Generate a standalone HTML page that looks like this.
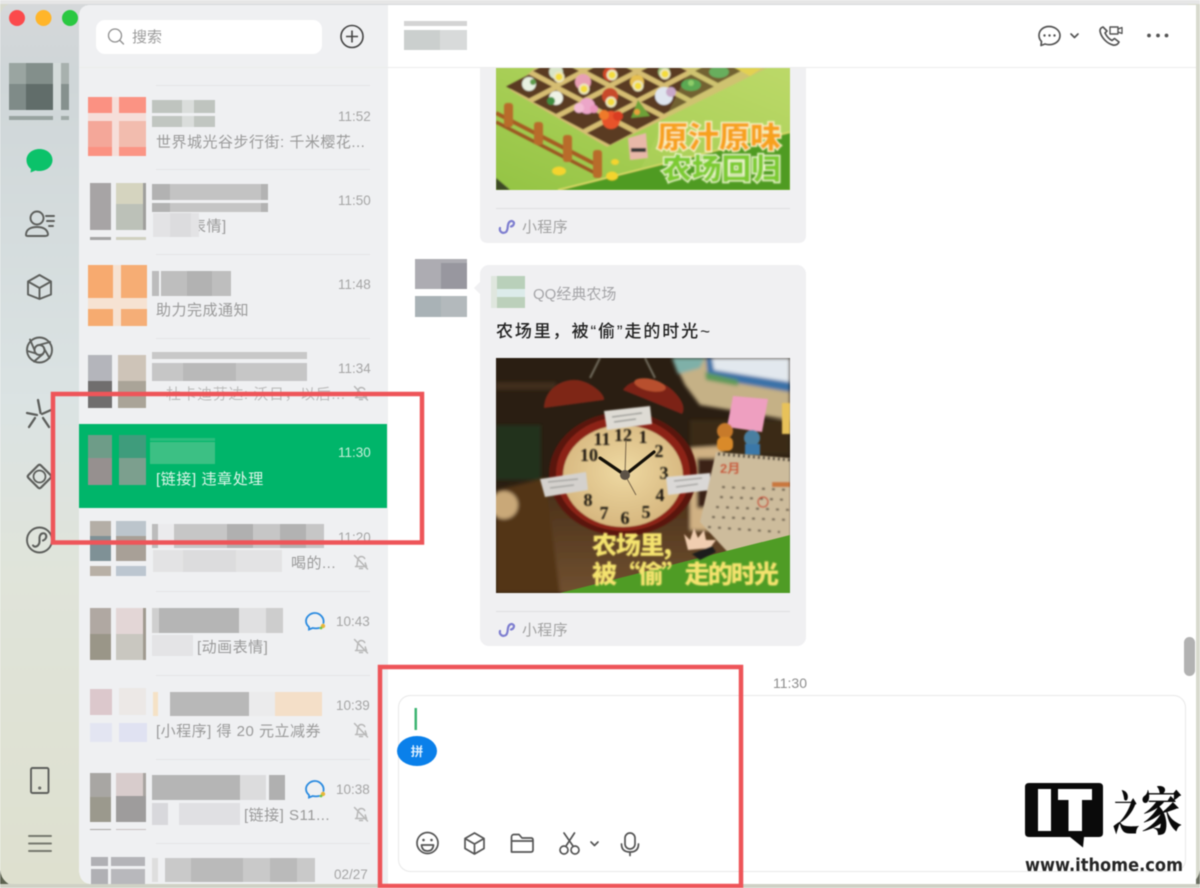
<!DOCTYPE html>
<html lang="zh"><head><meta charset="utf-8"><title>微信</title>
<style>
html,body{margin:0;padding:0;width:1200px;height:888px;overflow:hidden;background:#fff}
svg{display:block;filter:blur(.55px);font-family:"Liberation Sans","Noto Sans CJK SC",sans-serif}
.t{font-size:13.500px;fill:#a6a6a6}
.p{font-size:15px;fill:#9a9a9a;letter-spacing:.5px}
.ic{fill:none;stroke:#5d5f5c;stroke-width:1.9;stroke-linecap:round;stroke-linejoin:round}
.ic2{fill:none;stroke:#555;stroke-width:1.7;stroke-linecap:round;stroke-linejoin:round}
.bl{fill:none;stroke:#b8b8b8;stroke-width:1.500;stroke-linecap:round;stroke-linejoin:round}
</style></head><body>
<svg width="1200" height="888" viewBox="0 0 1200 888" xmlns="http://www.w3.org/2000/svg">
<defs>
<linearGradient id="side" x1="0" y1="0" x2="0" y2="1"><stop offset="0" stop-color="#d6d8da"/><stop offset=".08" stop-color="#cfd6d8"/><stop offset=".45" stop-color="#dbe3e3"/><stop offset=".65" stop-color="#e0e4da"/><stop offset="1" stop-color="#dee0cf"/></linearGradient>
<linearGradient id="grass" x1="0" y1="1" x2="1" y2="0"><stop offset="0" stop-color="#94c444"/><stop offset="1" stop-color="#bcd968"/></linearGradient>
<linearGradient id="tb" x1="0" y1="0" x2="0" y2="1"><stop offset="0" stop-color="#4a3019"/><stop offset="1" stop-color="#705030"/></linearGradient>
<radialGradient id="face" cx=".5" cy=".45" r=".65"><stop offset="0" stop-color="#eed9a2"/><stop offset="1" stop-color="#d2b078"/></radialGradient>
<filter id="b1"><feGaussianBlur stdDeviation=".7"/></filter>
<filter id="b2"><feGaussianBlur stdDeviation="1.800"/></filter>
<clipPath id="cf"><rect x="496" y="68" width="294" height="122"/></clipPath>
<clipPath id="cc"><rect x="496" y="358" width="294" height="235"/></clipPath>
<path id="pl" d="M-23 0L0-12L23 0L0 12Z" fill="#5a3b22"/>
<g id="bell"><path class="bl" d="M-6.500-6.500L6.500 7M-4.500 4.500C-3 2-4.500-5 0-5.500C1.500-5.500 3-4.800 3.700-3.500M4.300 1C4.500 2.500 5 3.500 5.500 4.500H-5.500M-1.500 6.500H1.500"/></g>
<g id="wc"><path d="M-1-8C-6-8-10-4-10 0C-10 3-8.500 4.700-7 6V8.500L-3.500 7C-1 7.500 1 7.500 3 7M7.500 2C8.500-3 4-8-1-8" fill="none" stroke="#2b8be0" stroke-width="1.800" stroke-linecap="round"/><circle cx="7" cy="5" r="2.200" fill="#e8b63a"/><circle cx="5" cy="7" r="1.400" fill="#6fc44a"/></g>
</defs>

<!-- window -->
<rect width="1200" height="888" fill="#d8dace"/>
<rect x="0" y="3" width="1196" height="881" rx="14" fill="url(#side)"/>
<path d="M0 870Q2 885 20 888H0Z" fill="#5c6250"/>
<path d="M1200 870Q1198 884 1180 888H1200Z" fill="#6a6e60"/>
<rect x="0" y="884" width="1200" height="4" fill="#cfd1c5"/>
<path d="M91 5H1196V884H92Q79 884 79 868V17Q79 5 91 5Z" fill="#fff"/>
<path d="M91 5H388V884H92Q79 884 79 868V17Q79 5 91 5Z" fill="#eff0f2"/>
<rect x="0" y="0" width="1200" height="4" fill="#e6e6e6"/>
<rect x="79" y="67" width="1117" height="1" fill="#ececec"/>

<!-- traffic lights -->
<circle cx="17" cy="18" r="8" fill="#fb4a4c"/><circle cx="43.500" cy="18" r="8" fill="#ffb52a"/><circle cx="70" cy="18" r="8" fill="#2ac841"/>

<!-- profile avatar -->
<rect x="9" y="63" width="17" height="21" fill="#9aa5a1"/><rect x="26" y="63" width="27" height="21" fill="#838f8b"/><rect x="9" y="84" width="17" height="26" fill="#7f8b88"/><rect x="26" y="84" width="27" height="26" fill="#616d6a"/><rect x="53" y="63" width="8" height="47" fill="#d4dbda"/><rect x="61" y="63" width="8" height="21" fill="#a8b1ae"/><rect x="61" y="84" width="8" height="26" fill="#86918e"/><rect x="9" y="116" width="44" height="4" fill="#98a3a0"/><rect x="61" y="116" width="8" height="4" fill="#a0aaa8"/>

<!-- sidebar icons -->
<path d="M39.500 149C32 149 26.500 154 26.500 160C26.500 164 28.500 167 31 169L30.500 172.500L35.500 170.500C37 171 38 171 39.500 171C47 171 52.500 166 52.500 160C52.500 154 47 149 39.500 149Z" fill="#0bc26a"/>
<g class="ic">
<circle cx="37" cy="218" r="6.500"/><path d="M26 235C26 229 31 227 37 227C43 227 47 229 48 234C48 235.500 47 236 45 236H28C27 236 26 236 26 235Z"/><path d="M46 216H54M47 221H54M49 226H53"/>
<path d="M39.500 275L51 281.500V294.500L39.500 299L28 294.500V281.500ZM28 281.500L39.500 288L51 281.500M39.500 288V299"/>
<circle cx="39.500" cy="350" r="12.500"/><circle cx="39.500" cy="350" r="5"/><path d="M34.500 350L30 339.500M39 345L50 342M44 348.500L49.500 358M43 354L34 361.500M36 353.500L27.500 351"/>
<path d="M38 400L40.500 413M27 413L37 415M42 414L51 410M35 418L29 427M43 418L49 427" stroke-width="2.300"/>
<path d="M38 465.500Q39.500 464 41 465.500L50.500 475Q52 476.500 50.500 478L41 487.500Q39.500 489 38 487.500L28.500 478Q27 476.500 28.500 475Z" stroke-width="2.200"/><circle cx="39.500" cy="476.500" r="6" stroke-width="1.700"/>
<circle cx="39.500" cy="540" r="12.500"/><path d="M33 545.500C35 548 39 546 39.500 542V537.500C40 533 44.500 532 46 535C47 537.500 45 540 43 540.500" stroke-width="2.100"/>
<rect x="31" y="768" width="17.500" height="25" rx="1.500"/><circle cx="39.700" cy="788" r=".6"/>
<path d="M29 836H51M29 843.500H51M29 851H51" stroke="#77796f"/>
</g>

<!-- search -->
<rect x="96" y="20" width="226" height="34" rx="9" fill="#fff"/>
<circle cx="115" cy="35.500" r="6.500" fill="none" stroke="#8e8e8e" stroke-width="1.300"/><path d="M120 40.500L123.500 44" stroke="#8e8e8e" stroke-width="1.300" stroke-linecap="round"/>
<text x="132" y="42" font-size="15" fill="#9b9b9b">搜索</text>
<circle cx="352" cy="36.500" r="11" fill="none" stroke="#444" stroke-width="1.600"/><path d="M346 36.500H358M352 30.500V42.500" stroke="#444" stroke-width="1.600"/>

<!-- separators -->
<g fill="#e4e4e6"><rect x="156" y="85" width="214" height="1"/><rect x="156" y="169" width="214" height="1"/><rect x="156" y="254" width="214" height="1"/><rect x="156" y="338" width="214" height="1"/><rect x="156" y="591" width="214" height="1"/><rect x="156" y="675" width="214" height="1"/><rect x="156" y="759" width="214" height="1"/><rect x="156" y="843" width="214" height="1"/></g>

<!-- row 1 -->
<rect x="88" y="97" width="58" height="59" fill="#f6ded9"/>
<rect x="88" y="97" width="24" height="16" fill="#fb9182"/><rect x="119" y="97" width="27" height="16" fill="#fb9383"/><rect x="88" y="121" width="24" height="26" fill="#f4a799"/><rect x="119" y="121" width="27" height="26" fill="#f2bcae"/><rect x="88" y="147" width="24" height="9" fill="#fb9282"/><rect x="119" y="147" width="27" height="9" fill="#fb9585"/>
<rect x="152" y="100" width="63" height="13" fill="#bfc4bf"/><rect x="152" y="116" width="63" height="11" fill="#c1c6c1"/><rect x="182" y="100" width="12" height="27" fill="#dadddb"/><rect x="152" y="113" width="63" height="3" fill="#eff0f2"/>
<text class="t" x="338" y="121">11:52</text>
<text class="p" x="156" y="147">世界城光谷步行街: 千米樱花...</text>

<!-- row 2 -->
<rect x="90" y="183" width="21" height="47" fill="#a7a4a5"/><rect x="90" y="237" width="21" height="3" fill="#a5a5a5"/><rect x="116" y="183" width="27" height="21" fill="#d5d4bf"/><rect x="116" y="204" width="27" height="26" fill="#bcc1b8"/><rect x="143" y="183" width="3" height="47" fill="#9f9f9c"/><rect x="116" y="237" width="30" height="3" fill="#d0d0c0"/>
<rect x="152" y="184" width="116" height="16" fill="#c3c3c3"/><rect x="152" y="203" width="116" height="9" fill="#c5c5c5"/><rect x="152" y="184" width="18" height="28" fill="#b2b2b2"/><rect x="261" y="184" width="7" height="28" fill="#b3b3b3"/><rect x="152" y="200" width="116" height="3" fill="#eff0f2"/>
<text class="t" x="338" y="205">11:50</text>
<text class="p" x="191" y="231">表情]</text>
<rect x="153" y="213" width="46" height="24" fill="#e3e3e5"/><rect x="170" y="213" width="21" height="24" fill="#dcdcde"/>

<!-- row 3 -->
<rect x="88" y="265" width="59" height="61" fill="#f6e2d2"/><rect x="88" y="265" width="25" height="33" fill="#f7aa6f"/><rect x="121" y="265" width="26" height="33" fill="#f6ad74"/><rect x="88" y="309" width="25" height="17" fill="#f6ab70"/><rect x="121" y="309" width="26" height="17" fill="#f5ae77"/>
<rect x="152" y="271" width="7" height="25" fill="#bcbcbc"/><rect x="161" y="271" width="70" height="25" fill="#bebebe"/><rect x="187" y="271" width="25" height="25" fill="#b2b2b2"/>
<text class="t" x="338" y="289">11:48</text>
<text class="p" x="156" y="315">助力完成通知</text>

<!-- row 4 -->
<rect x="88" y="355" width="24" height="26" fill="#b4b5bb"/><rect x="88" y="381" width="24" height="27" fill="#706e6e"/><rect x="118" y="355" width="28" height="26" fill="#cec4b8"/><rect x="118" y="381" width="28" height="27" fill="#aaa498"/>
<rect x="152" y="352" width="155" height="7" fill="#c8c8c8"/><rect x="152" y="363" width="155" height="18" fill="#c6c6c6"/><rect x="183" y="363" width="53" height="18" fill="#b9b9b9"/>
<text class="t" x="338" y="373">11:34</text>
<text class="p" x="166" y="399" style="fill:#bcbcbc;letter-spacing:0" textLength="179">杜卡迪芬达: 沃日，以后...</text>
<use href="#bell" x="361" y="393"/>

<!-- selected -->
<rect x="79" y="424" width="308" height="84" fill="#00b56a"/>
<rect x="88" y="435" width="24" height="23" fill="#6e9c88"/><rect x="88" y="458" width="24" height="27" fill="#96908f"/><rect x="119" y="435" width="27" height="23" fill="#3f9c7c"/><rect x="119" y="458" width="27" height="27" fill="#7c9f8e"/>
<rect x="150" y="438" width="65" height="3" fill="#2bbd7d"/><rect x="150" y="442" width="65" height="22" fill="#3cc084"/>
<text x="338" y="457" font-size="13.500" fill="#c4efd9">11:30</text>
<text x="156" y="484" font-size="15" letter-spacing=".6" fill="#dff6ea">[链接] 违章处理</text>

<!-- row 6 -->
<rect x="90" y="521" width="21" height="15" fill="#b4aea6"/><rect x="90" y="536" width="21" height="25" fill="#7f9196"/><rect x="90" y="566" width="21" height="10" fill="#b8b0a6"/><rect x="116" y="521" width="30" height="15" fill="#bcc5cc"/><rect x="116" y="536" width="30" height="25" fill="#a8a097"/><rect x="116" y="566" width="30" height="10" fill="#bcc6d0"/>
<rect x="152" y="524" width="6" height="24" fill="#bcbcbc"/><rect x="158" y="524" width="16" height="24" fill="#ebebed"/><rect x="174" y="524" width="150" height="24" fill="#c6c6c6"/><rect x="227" y="524" width="26" height="24" fill="#b0b0b0"/><rect x="280" y="524" width="26" height="24" fill="#b2b2b2"/>
<text class="t" x="338" y="542">11:20</text>
<rect x="153" y="550" width="129" height="22" fill="#e3e3e4"/><rect x="183" y="550" width="53" height="22" fill="#dcdcdd"/>
<text class="p" x="291" y="568">喝的...</text>
<use href="#bell" x="361" y="562"/>

<!-- row 7 -->
<rect x="90" y="608" width="21" height="26" fill="#b0a8a2"/><rect x="90" y="634" width="21" height="26" fill="#9a9688"/><rect x="116" y="608" width="27" height="26" fill="#e3d6d6"/><rect x="116" y="634" width="27" height="26" fill="#c9c7c0"/><rect x="143" y="608" width="3" height="52" fill="#a09a90"/>
<rect x="152" y="608" width="7" height="25" fill="#cfcfcf"/><rect x="159" y="608" width="80" height="25" fill="#b5b5b5"/><rect x="239" y="608" width="27" height="25" fill="#e0e0e1"/><rect x="266" y="608" width="17" height="25" fill="#cdcdcd"/>
<rect x="152" y="635" width="41" height="21" fill="#e4e4e6"/>
<text class="t" x="336" y="626">10:43</text>
<text class="p" x="197" y="652">[动画表情]</text>
<use href="#wc" x="316" y="621"/>
<use href="#bell" x="361" y="646"/>

<!-- row 8 -->
<rect x="90" y="689" width="22" height="26" fill="#dcc8cc"/><rect x="90" y="723" width="22" height="19" fill="#e3e5f2"/><rect x="119" y="688" width="27" height="27" fill="#ece8e6"/><rect x="119" y="723" width="28" height="19" fill="#e0e2f2"/>
<rect x="153" y="692" width="5" height="24" fill="#f5e2c6"/><rect x="170" y="692" width="79" height="24" fill="#b8b8b8"/><rect x="249" y="692" width="26" height="24" fill="#ebebec"/><rect x="275" y="692" width="47" height="24" fill="#f4dfc8"/>
<text class="t" x="336" y="710">10:39</text>
<text class="p" x="156" y="736">[小程序] 得 20 元立减券</text>
<use href="#bell" x="361" y="730"/>

<!-- row 9 -->
<rect x="90" y="773" width="21" height="24" fill="#a8a6a3"/><rect x="90" y="797" width="21" height="25" fill="#9b998d"/><rect x="116" y="773" width="27" height="23" fill="#d8cccc"/><rect x="143" y="773" width="3" height="23" fill="#a8a4a0"/><rect x="116" y="796" width="30" height="26" fill="#9e9c9c"/><rect x="90" y="829" width="21" height="1" fill="#a8a6a3"/><rect x="116" y="829" width="30" height="1" fill="#c8c0c0"/>
<rect x="152" y="775" width="88" height="25" fill="#b5b5b5"/><rect x="240" y="775" width="26" height="25" fill="#dcdcdd"/><rect x="269" y="775" width="16" height="25" fill="#b0b0b0"/>
<rect x="152" y="803" width="16" height="22" fill="#d8d8dc"/><rect x="179" y="803" width="61" height="22" fill="#e0e0e3"/>
<text class="t" x="336" y="794">10:38</text>
<text class="p" x="244" y="820">[链接] S11...</text>
<use href="#wc" x="316" y="789"/>
<use href="#bell" x="361" y="814"/>

<!-- row 10 -->
<rect x="91" y="857" width="17" height="9" fill="#b0b0b4"/><rect x="111" y="857" width="34" height="9" fill="#b4b4b8"/><rect x="91" y="869" width="17" height="15" fill="#b0b0b4"/><rect x="111" y="869" width="34" height="15" fill="#b8b8bc"/>
<rect x="152" y="858" width="6" height="24" fill="#dedede"/><rect x="165" y="858" width="150" height="24" fill="#c9c9c9"/><rect x="191" y="858" width="52" height="24" fill="#bababa"/><rect x="270" y="858" width="27" height="24" fill="#bababa"/>
<text class="t" x="334" y="879">02/27</text>

<!-- chat header -->
<rect x="404" y="21" width="63" height="5" fill="#d4d4d4"/><rect x="404" y="30" width="63" height="20" fill="#cbcfce"/><rect x="440" y="30" width="27" height="20" fill="#d8dada"/>
<g class="ic2">
<path d="M1049 26.500C1043 26.500 1039 30.500 1039 35.500C1039 38 1040 40 1041.500 41.500L1041 45.500L1045 44C1046.500 44.500 1048 44.700 1049 44.700C1055 44.700 1060 41 1060 35.500C1060 30.500 1055 26.500 1049 26.500Z"/>
<path d="M1071 34L1074.500 37.500L1078 34"/>
<path d="M1103 27C1100 28 1099.500 30 1100.500 33C1102 38 1107 43.500 1113 45C1116 45.500 1118 44 1119 42L1114.500 38.500L1112 40.500C1109 39 1106.500 36 1105 33L1107 31Z"/>
<rect x="1110" y="27" width="8" height="7" stroke-width="1.400"/><path d="M1118 29L1122 27.500V33.500L1118 32" stroke-width="1.300"/>
</g>
<circle cx="1044.500" cy="35.500" r="1.200" fill="#555"/><circle cx="1049.500" cy="35.500" r="1.200" fill="#555"/><circle cx="1054.500" cy="35.500" r="1.200" fill="#555"/>
<circle cx="1149" cy="35.500" r="1.900" fill="#555"/><circle cx="1158" cy="35.500" r="1.900" fill="#555"/><circle cx="1166.500" cy="35.500" r="1.900" fill="#555"/>

<!-- card 1 -->
<path d="M480 68H806V235Q806 243 798 243H488Q480 243 480 235Z" fill="#f0f0f2"/>
<g clip-path="url(#cf)">
 <rect x="496" y="68" width="294" height="122" fill="url(#grass)"/>
 <g filter="url(#b1)">
 <path d="M510 90L535 68H767L607 147Z" fill="#d6bd72"/>
 <use href="#pl" x="610" y="133"/><use href="#pl" x="583" y="117.500"/><use href="#pl" x="556" y="102"/><use href="#pl" x="529" y="86.500"/><use href="#pl" x="637" y="117.500"/><use href="#pl" x="610" y="102"/><use href="#pl" x="583" y="86.500"/><use href="#pl" x="556" y="71"/><use href="#pl" x="664" y="102"/><use href="#pl" x="637" y="86.500"/><use href="#pl" x="610" y="71"/><use href="#pl" x="691" y="86.500"/><use href="#pl" x="664" y="71"/><use href="#pl" x="718" y="71"/>
 <!-- crops -->
 <circle cx="611" cy="120" r="9" fill="#e8532a"/><circle cx="604" cy="115" r="5" fill="#ef7a2a"/><circle cx="618" cy="116" r="5" fill="#d93d20"/>
 <circle cx="587" cy="106" r="8" fill="#eca6c8"/><circle cx="579" cy="108" r="5" fill="#f3bcd4"/><circle cx="594" cy="109" r="4" fill="#e995bb"/>
 <path d="M631 118L638 100L650 116Z" fill="#6ea238"/><circle cx="637" cy="112" r="3" fill="#e9a13a"/>
 <circle cx="664" cy="96" r="9" fill="#dfe5ee"/><circle cx="671" cy="92" r="5" fill="#c8a8c8"/>
 <ellipse cx="691" cy="85" rx="10" ry="6" fill="#3d9a4d"/><circle cx="691" cy="83" r="3" fill="#7fcb6a"/>
 <ellipse cx="719" cy="72" rx="10" ry="6" fill="#4da05a"/>
 <circle cx="529" cy="84" r="7" fill="#e7f0e0"/><circle cx="533" cy="82" r="3" fill="#5d9a4a"/>
 <circle cx="556" cy="98" r="7" fill="#eef2e6"/><circle cx="551" cy="101" r="4" fill="#3f8c3f"/>
 <circle cx="610" cy="96" r="8" fill="#c84a2a"/><circle cx="583" cy="82" r="8" fill="#e8a0b4"/><circle cx="637" cy="82" r="7" fill="#e7c050"/><circle cx="610" cy="74" r="7" fill="#d14628"/><circle cx="556" cy="72" r="7" fill="#d8e4c8"/><circle cx="664" cy="72" r="6" fill="#a0c078"/>
 <path d="M735 68H762L750 76Z" fill="#f1cf4a"/>
 <g fill="#f4dc3a" stroke="#ece6bc" stroke-width="2"><circle cx="559" cy="77" r="4.500"/><circle cx="584" cy="89" r="4.500"/><circle cx="612" cy="75" r="4.500"/><circle cx="611" cy="102" r="4.500"/><circle cx="638" cy="86" r="4.500"/><circle cx="665" cy="74" r="4.500"/></g>
 <path d="M496 113L597 165" stroke="#a65c22" stroke-width="4" fill="none"/><path d="M496 122L597 174" stroke="#9c5620" stroke-width="3.500" fill="none"/>
 <g fill="#b86c2c"><rect x="504" y="103" width="9" height="24" rx="3"/><rect x="534" y="122" width="9" height="23" rx="3"/><rect x="563" y="135" width="9" height="27" rx="3"/><rect x="593" y="150" width="9" height="28" rx="3"/></g>
 <path d="M558 190L790 133V190Z" fill="#4f9b23"/>
 <path d="M558 190L790 132" stroke="#e6dd6a" stroke-width="1.500"/>
 <path d="M690 68H790V133L640 170Z" fill="#bdd968" opacity=".25"/>
 <ellipse cx="559" cy="171" rx="7" ry="4.500" fill="#f4d42e"/><ellipse cx="612" cy="176" rx="6" ry="4.500" fill="#f4d42e"/><ellipse cx="615" cy="162" rx="4" ry="3" fill="#f4d42e"/>
 <path d="M496 190V178L510 190Z" fill="#3d4a28"/>
 <path d="M628 138L646 133L648 158L630 160Z" fill="#e8b8a8"/><rect x="631" y="148" width="15" height="4" fill="#333"/>
 </g>
 <text x="657" y="148" font-size="30" font-weight="900" fill="#f7a11f" stroke="#fdf6c8" stroke-width="2.500" paint-order="stroke" textLength="124" lengthAdjust="spacingAndGlyphs" filter="url(#b1)" style="font-family:'Noto Sans CJK SC',sans-serif">原汁原味</text>
 <text x="662" y="179" font-size="29" font-weight="900" fill="#7ccb32" stroke="#f3f8d0" stroke-width="2.500" paint-order="stroke" textLength="119" lengthAdjust="spacingAndGlyphs" filter="url(#b1)" style="font-family:'Noto Sans CJK SC',sans-serif">农场回归</text>
</g>
<rect x="496" y="208" width="294" height="1" fill="#dfdfe1"/>
<g fill="none" stroke="#7f7fd0" stroke-width="2.200" stroke-linecap="round"><path d="M500 228C499 232 503 234 506 232C508 230 507.500 227 508 225C508.500 222 511 220 513 221.500C515 223 513.500 226 511 226.500"/></g>
<text x="522" y="232" font-size="15" letter-spacing=".3" fill="#a2a2a2">小程序</text>

<!-- card 2 -->
<rect x="415" y="259" width="52" height="30" fill="#adacb2"/><rect x="441" y="263" width="26" height="26" fill="#98979f"/><rect x="415" y="296" width="52" height="21" fill="#a9b2b6"/><rect x="441" y="296" width="26" height="21" fill="#b3b9bc"/>
<rect x="480" y="265" width="326" height="381" rx="9" fill="#f0f0f2"/>
<path d="M480 282L474 288L480 294Z" fill="#f0f0f2"/>
<rect x="491" y="276" width="34" height="32" fill="#dfe6de"/><rect x="497" y="276" width="28" height="13" fill="#b9d0ba"/><rect x="497" y="289" width="28" height="8" fill="#dcebea"/><rect x="497" y="297" width="28" height="11" fill="#bcd0bb"/>
<text x="533" y="299" font-size="15" fill="#a5a5a8">QQ经典农场</text>
<text x="496" y="337" font-size="17" fill="#222" font-weight="500" textLength="214">农场里，被“偷”走的时光~</text>

<!-- clock image -->
<g clip-path="url(#cc)">
 <rect x="496" y="358" width="294" height="235" fill="#2a1e12"/>
 <g filter="url(#b2)">
 <rect x="496" y="382" width="60" height="8" fill="#3f2e1c"/>
 <rect x="496" y="425" width="45" height="55" fill="#20301f"/>
 <rect x="496" y="490" width="294" height="103" fill="url(#tb)"/>
 <path d="M496 490L545 478L560 593H496Z" fill="#523519"/>
 <path d="M672 358H790V420L700 405L685 385Z" fill="#c5b186"/>
 <path d="M706 358H790V392L708 378Z" fill="#3a72a8"/>
 <path d="M712 358H790V382L714 370Z" fill="#e2e8ee"/>
 <path d="M705 372L738 380V386L706 380Z" fill="#5e9a5a"/>
 <path d="M672 358H705L700 368L678 374Z" fill="#7fb0a8"/>
 <rect x="690" y="420" width="100" height="35" fill="#3a2a18"/>
 <path d="M690 448L722 446V530L690 530Z" fill="#d0b183"/>
 <rect x="697" y="458" width="20" height="50" fill="#3a2412"/>
 <ellipse cx="504" cy="505" rx="14" ry="14" fill="#c9a878"/>
 </g>
 <g filter="url(#b1)">
 <path d="M733 396L768 399L762 432L727 427Z" fill="#ee9fc0"/>
 <path d="M782 403H790V434H782Z" fill="#e8c25a"/>
 <circle cx="725" cy="431" r="8" fill="#c77a2a"/><rect x="717" y="437" width="16" height="14" rx="5" fill="#d98a2a"/>
 <circle cx="752" cy="438" r="8" fill="#4a7fa0"/><rect x="745" y="444" width="15" height="11" fill="#3a78a8"/>
 <path d="M544 408C544 388 565 376 582 381C595 385 605 395 604 400Z" fill="#7e2618"/>
 <path d="M623 390C630 378 655 376 670 388C682 398 686 408 682 414Z" fill="#7c2417"/>
 <ellipse cx="650" cy="385" rx="16" ry="6" transform="rotate(12 650 385)" fill="#b8502e"/>
 <path d="M590 378L600 358M655 378L645 358" stroke="#6f6a5c" stroke-width="2"/>
 <ellipse cx="623" cy="474" rx="74" ry="62" fill="#5a1810"/>
 <ellipse cx="623" cy="474" rx="67" ry="57" fill="#8c2418"/>
 <ellipse cx="623" cy="476" rx="60" ry="51" fill="url(#face)"/>
 </g>
 <g font-family="'Liberation Serif',serif" font-weight="700" font-size="18" fill="#1a140c" filter="url(#b1)" text-anchor="middle">
 <text x="602" y="445">11</text><text x="623" y="441">12</text><text x="643" y="443">1</text><text x="659" y="457">2</text><text x="664" y="479">3</text><text x="660" y="501">4</text><text x="646" y="518">5</text><text x="625" y="524">6</text><text x="604" y="519">7</text><text x="588" y="506">8</text><text x="589" y="461">10</text>
 </g>
 <path d="M625 475L600 458M625 475L654 452" stroke="#141008" stroke-width="3.200" stroke-linecap="round"/>
 <path d="M625 475L626 440M625 475L636 495" stroke="#77654a" stroke-width="1"/>
 <circle cx="625" cy="475" r="5" fill="#5c5246"/>
 <g filter="url(#b1)">
 <path d="M604 411L650 406L652 424L607 430Z" fill="#dedbd4"/><path d="M612 417L642 413M614 422L636 419" stroke="#8a8a86" stroke-width="1.200"/>
 <path d="M540 479L586 472L588 490L545 497Z" fill="#d4d1cd"/><path d="M548 482L578 479M550 488L574 485" stroke="#9a9a96" stroke-width="1.200"/>
 <path d="M666 477L710 473L711 490L668 495Z" fill="#dad8d6"/><path d="M674 481L702 478M676 487L698 484" stroke="#9a9a96" stroke-width="1.200"/>
 <path d="M716 452L790 458V545L735 560L700 522Z" fill="#cdbc9c"/>
 <path d="M718 454L790 460" stroke="#3a3228" stroke-width="3" stroke-dasharray="2 3"/>
 <text x="720" y="473" font-size="13" fill="#c8502a" font-weight="700">2月</text>
 <rect x="772" y="482" width="18" height="5" fill="#c9783e"/>
 <g stroke="#6f6350" stroke-width="2.200" stroke-dasharray="3 7" fill="none"><path d="M722 487L790 490"/><path d="M720 497L790 500"/><path d="M716 507L790 510"/><path d="M712 517L790 520"/><path d="M708 527L780 532"/></g>
 <circle cx="763" cy="502" r="5" fill="none" stroke="#c8452a" stroke-width="1.300"/>
 </g>
 <path d="M560 593L790 535V593Z" fill="#4f9c25"/>
 <g filter="url(#b1)"><path d="M688 550L684 534L690 540L694 528L698 538L704 530L706 540L716 540L710 548Z" fill="#f0cdb0"/><path d="M692 554L712 546L716 552L700 560Z" fill="#1a1a1a"/></g>
 <text x="592" y="554" font-size="25" font-weight="900" fill="#f5e36e" textLength="80" filter="url(#b1)" style="font-family:'Noto Sans CJK SC',sans-serif">农场里,</text>
 <text x="592" y="583" font-size="25" font-weight="900" fill="#f5e36e" textLength="187" filter="url(#b1)" style="font-family:'Noto Sans CJK SC',sans-serif">被“偷”走的时光</text>
</g>
<rect x="496" y="611" width="294" height="1" fill="#dfdfe1"/>
<g fill="none" stroke="#7f7fd0" stroke-width="2.200" stroke-linecap="round"><path d="M500 631C499 635 503 637 506 635C508 633 507.500 630 508 628C508.500 625 511 623 513 624.500C515 626 513.500 629 511 629.500"/></g>
<text x="522" y="635" font-size="15" letter-spacing=".3" fill="#a2a2a2">小程序</text>

<!-- timestamp, scrollbar, input -->
<text x="773" y="688" font-size="14" fill="#8e8e8e">11:30</text>
<rect x="1184" y="637" width="11" height="39" rx="5.500" fill="#b2b2b2"/>
<rect x="398.500" y="695.500" width="787" height="176" rx="12" fill="#fff" stroke="#e8e8e8"/>
<rect x="414.500" y="708" width="2.500" height="22" fill="#3fb573"/>
<ellipse cx="417" cy="751" rx="20" ry="15" fill="#0a80ea"/>
<text x="417" y="756" font-size="12.500" font-weight="700" fill="#dcefff" text-anchor="middle">拼</text>
<g class="ic2">
<circle cx="427.500" cy="843" r="10.500"/><path d="M421.500 845H433.500C433 850 430 851 427.500 851C425 851 422 850 421.500 845Z"/>
<path d="M474.500 833L484 838.500V848.500L474.500 854L465 848.500V838.500ZM465 838.500L474.500 844L484 838.500M474.500 844V854"/>
<path d="M511.500 852V837C511.500 835.500 512.500 834.500 514 834.500H519L522 838H531C532.500 838 533 839 533 840V850C533 851.500 532 852 531 852ZM511.500 841H533"/>
<circle cx="564" cy="850" r="4"/><circle cx="575" cy="850" r="4"/><path d="M566 846L574.500 833M573 846L564 833"/>
<path d="M591 842L594.500 845.500L598 842"/>
<rect x="625" y="833" width="10" height="16" rx="5"/><path d="M621.500 844C621.500 850 625 852 630 852C635 852 638.500 850 638.500 844M630 852V855.500"/>
</g>
<circle cx="423.500" cy="840" r="1.300" fill="#555"/><circle cx="431.500" cy="840" r="1.300" fill="#555"/>

<!-- red annotation boxes -->
<rect x="53" y="394" width="369" height="148.500" fill="none" stroke="#ee5559" stroke-width="4.500"/>
<rect x="380" y="667" width="361" height="219" fill="none" stroke="#ee5559" stroke-width="4.500"/>

<!-- watermark -->
<path d="M1029 783H1099Q1103 783 1103 787V833Q1103 837 1099 837H1084L1083 847.500L1070 837H1029Q1025 837 1025 833V787Q1025 783 1029 783Z" fill="#0a0a0a"/>
<rect x="1038" y="789" width="13" height="42" fill="#fff"/><rect x="1058" y="789" width="34" height="11" fill="#fff"/><rect x="1068.500" y="789" width="13.500" height="42" fill="#fff"/>
<text transform="translate(1113 830) scale(.8 1.420)" x="0" y="0" font-size="33" font-weight="900" fill="#0a0a0a" style="font-family:'Noto Serif CJK SC',serif">之</text>
<text transform="translate(1141 830) scale(1.150 1.420)" x="0" y="0" font-size="36" font-weight="900" fill="#0a0a0a" style="font-family:'Noto Serif CJK SC',serif">家</text>
<text x="1025" y="871" font-size="17.500" font-weight="700" fill="#262626" textLength="158" style="font-family:'DejaVu Sans','Liberation Sans',sans-serif" lengthAdjust="spacingAndGlyphs">www.ithome.com</text>
</svg>
</body></html>
